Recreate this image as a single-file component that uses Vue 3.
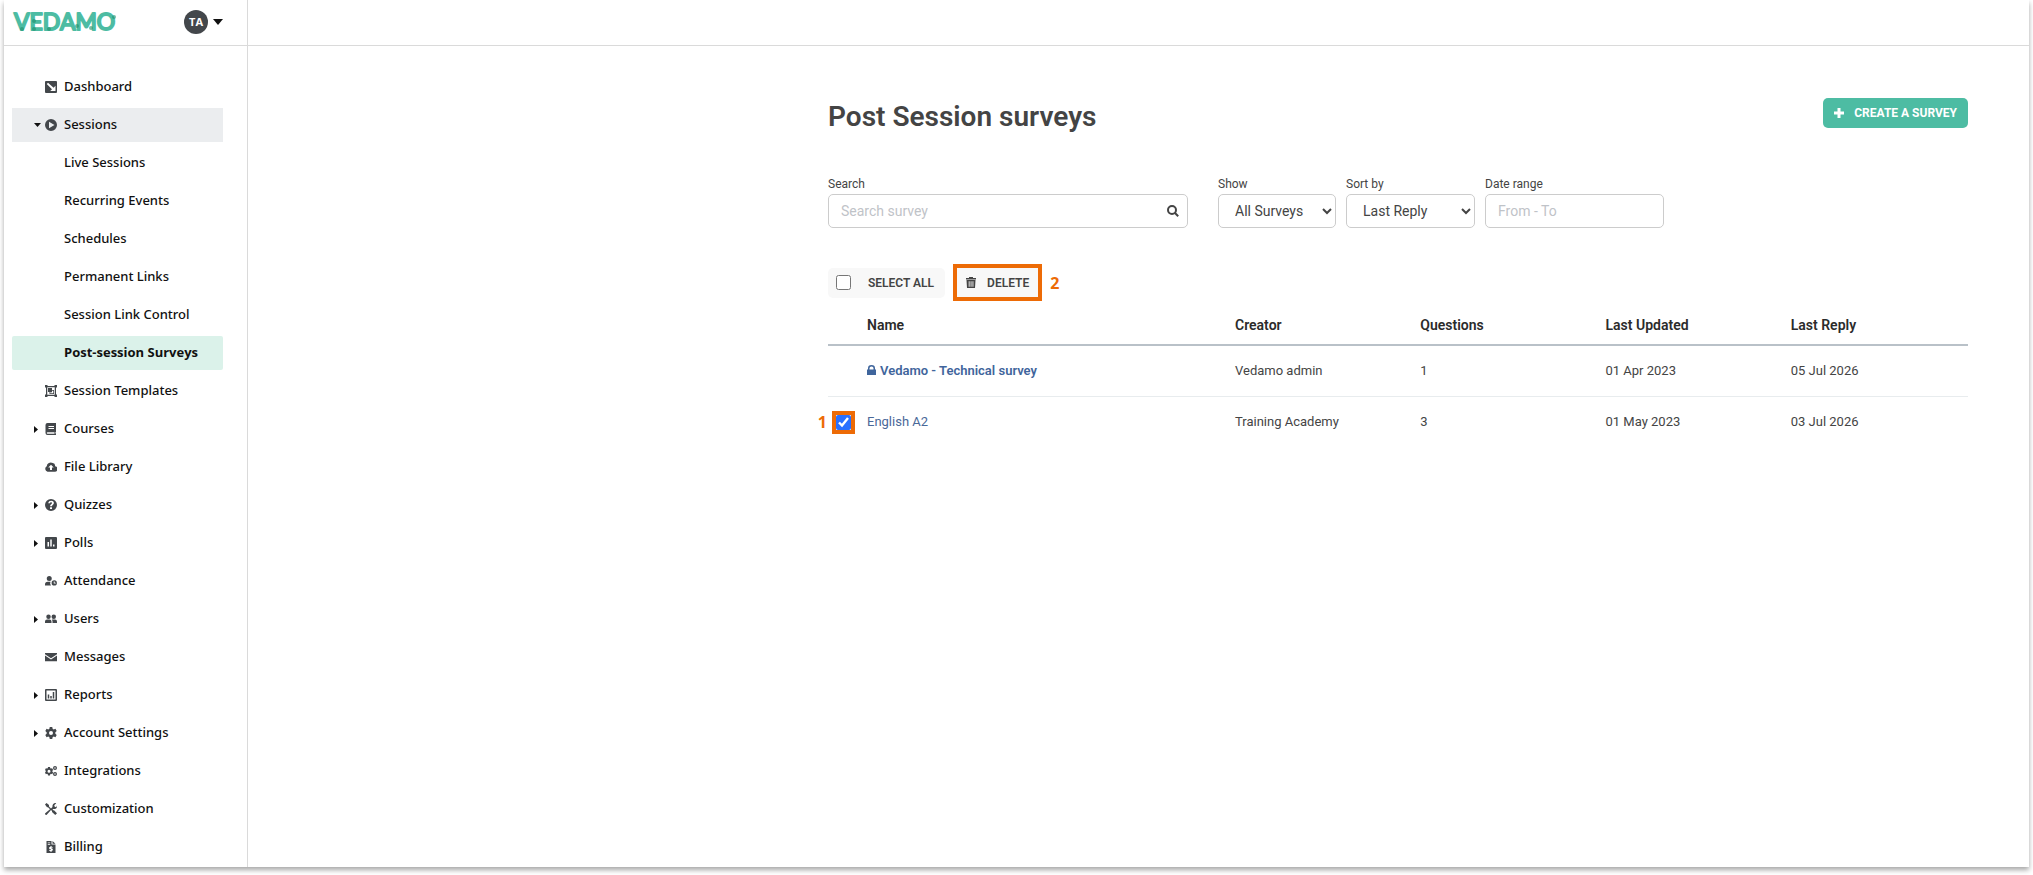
<template>
  <div class="app-frame">
    <header class="topbar">
      <div class="topbar-brand">
        <a href="#" class="logo" aria-label="Vedamo">
          <svg width="112" height="36" viewBox="0 0 112 36">
            <text x="2" y="26" class="logo-text">VEDAMO</text>
            <g class="logo-dots">
              <circle cx="10" cy="25" r="2" />
              <circle cx="22" cy="17" r="2" />
              <circle cx="22" cy="25" r="2" />
              <circle cx="37" cy="25" r="2" />
              <circle cx="65" cy="22" r="2" />
              <circle cx="79" cy="24" r="2" />
              <circle cx="102" cy="13" r="2" />
            </g>
          </svg>
        </a>
        <button type="button" class="account-btn" aria-label="Account">
          <span class="avatar">TA</span>
          <svg class="account-caret" width="10" height="6" viewBox="0 0 10 6"><path d="M0 0h10L5 6z" /></svg>
        </button>
      </div>
    </header>

    <div class="layout">
      <nav class="sidebar">
        <ul class="menu">
          <li v-for="item in menu" :key="item.label">
            <a href="#" class="menu-link" :class="{ open: item.open, active: item.active }">
              <span class="menu-caret">
                <svg v-if="item.open" width="7" height="4" viewBox="0 0 7 4"><path d="M0 0h7L3.500 4z" /></svg>
                <svg v-else-if="item.children" width="4" height="7" viewBox="0 0 4 7"><path d="M0 0v7l4-3.500z" /></svg>
              </span>
              <span class="menu-icon">
                <svg v-if="item.icon" width="12" height="12" viewBox="0 0 24 24">
                  <path fill-rule="evenodd" :d="icons[item.icon]" />
                </svg>
              </span>
              <span class="menu-label">{{ item.label }}</span>
            </a>
          </li>
        </ul>
      </nav>

      <main class="content">
        <div class="page">
          <div class="page-head">
            <h1>Post Session surveys</h1>
            <button type="button" class="btn btn-primary">
              <svg width="10" height="10" viewBox="0 0 10 10"><path d="M3.500 0h3v3.500H10v3H6.500V10h-3V6.500H0v-3h3.500z" /></svg>
              CREATE A SURVEY
            </button>
          </div>

          <form class="filters" @submit.prevent>
            <div class="field field-search">
              <label for="search">Search</label>
              <div class="search-box">
                <input id="search" v-model="search" type="text" placeholder="Search survey" class="control">
                <button type="submit" class="search-btn" aria-label="Search">
                  <svg width="12" height="12" viewBox="0 0 12 12">
                    <circle cx="5" cy="5" r="4" />
                    <path d="M8 8l3.200 3.200" />
                  </svg>
                </button>
              </div>
            </div>
            <div class="field field-show">
              <label for="show">Show</label>
              <select id="show" class="control">
                <option>All Surveys</option>
              </select>
            </div>
            <div class="field field-sort">
              <label for="sort">Sort by</label>
              <select id="sort" class="control">
                <option>Last Reply</option>
              </select>
            </div>
            <div class="field field-date">
              <label for="range">Date range</label>
              <input id="range" v-model="range" type="text" placeholder="From - To" class="control">
            </div>
          </form>

          <div class="bulk-actions">
            <label class="btn select-all">
              <input v-model="allSelected" type="checkbox">
              SELECT ALL
            </label>
            <div class="highlight">
              <button type="button" class="btn btn-delete">
                <svg width="10" height="11" viewBox="0 0 10 11">
                  <path fill-rule="evenodd" d="M3 0h4v1h3v1.500H0V1h3zM.500 3h9l-.500 8H1zM2.700 4.200v5.500h.900V4.200zM4.600 4.200v5.500h.900V4.200zM6.500 4.200v5.500h.900V4.200z" />
                </svg>
                DELETE
              </button>
            </div>
            <span class="step">2</span>
          </div>

          <table class="surveys">
            <thead>
              <tr>
                <th class="col-check"></th>
                <th>Name</th>
                <th class="col-info">Creator</th>
                <th class="col-info">Questions</th>
                <th class="col-info">Last Updated</th>
                <th class="col-info">Last Reply</th>
              </tr>
            </thead>
            <tbody>
              <tr v-for="survey in surveys" :key="survey.name">
                <td class="col-check">
                  <div v-if="!survey.locked" class="highlight highlight-check">
                    <span class="step step-left">1</span>
                    <input v-model="survey.selected" type="checkbox" :aria-label="survey.name">
                  </div>
                </td>
                <td>
                  <a href="#" class="survey-link" :class="{ locked: survey.locked }">
                    <svg v-if="survey.locked" width="9" height="10" viewBox="0 0 9 10">
                      <path fill-rule="evenodd" d="M1 4.500V3.300a3.500 3.300 0 0 1 7 0v1.200h1V10H0V4.500zM2.500 4.500h4V3.300a2 1.900 0 0 0-4 0z" />
                    </svg>
                    {{ survey.name }}
                  </a>
                </td>
                <td>{{ survey.creator }}</td>
                <td>{{ survey.questions }}</td>
                <td>{{ survey.updated }}</td>
                <td>{{ survey.reply }}</td>
              </tr>
            </tbody>
          </table>
        </div>
      </main>
    </div>
  </div>
</template>

<script setup>
import { ref } from 'vue';

const search = ref('');
const range = ref('');
const allSelected = ref(false);

const menu = [
  { label: 'Dashboard', icon: 'dashboard' },
  { label: 'Sessions', icon: 'play', open: true },
  { label: 'Live Sessions' },
  { label: 'Recurring Events' },
  { label: 'Schedules' },
  { label: 'Permanent Links' },
  { label: 'Session Link Control' },
  { label: 'Post-session Surveys', active: true },
  { label: 'Session Templates', icon: 'template' },
  { label: 'Courses', icon: 'book', children: true },
  { label: 'File Library', icon: 'cloud' },
  { label: 'Quizzes', icon: 'question', children: true },
  { label: 'Polls', icon: 'poll', children: true },
  { label: 'Attendance', icon: 'userClock' },
  { label: 'Users', icon: 'users', children: true },
  { label: 'Messages', icon: 'mail' },
  { label: 'Reports', icon: 'report', children: true },
  { label: 'Account Settings', icon: 'gear', children: true },
  { label: 'Integrations', icon: 'gears' },
  { label: 'Customization', icon: 'tools' },
  { label: 'Billing', icon: 'invoice' },
];

const surveys = ref([
  { name: 'Vedamo - Technical survey', locked: true, creator: 'Vedamo admin', questions: 1, updated: '01 Apr 2023', reply: '05 Jul 2026' },
  { name: 'English A2', selected: true, creator: 'Training Academy', questions: 3, updated: '01 May 2023', reply: '03 Jul 2026' },
]);

// 24x24 paths, drawn at 12px
const icons = {
  dashboard: 'M2 0h20a2 2 0 0 1 2 2v20a2 2 0 0 1-2 2H2a2 2 0 0 1-2-2V2a2 2 0 0 1 2-2zM6 3.500L3.500 6l10.500 10.500-3.500 3.500H21V9.500l-3.800 4z',
  play: 'M12 0a12 12 0 1 1 0 24a12 12 0 0 1 0-24zM8 5.500v13L19 12z',
  template: 'M0 0h5v2h14V0h5v5h-2v14h2v5h-5v-2H5v2H0v-5h2V5H0zM4.500 4.500v15h15v-15zM6 6h8v4h4v8H9v-4H6zM10.500 14.500v2h6v-5H14v3z',
  book: 'M5 0h17v18h-1v3h1v3H5a4 4 0 0 1-4-4V4a4 4 0 0 1 4-4zM7 6v2h11V6zM7 10v2h11v-2zM5 18.500a1.500 1.500 0 0 0 0 3h14v-3z',
  cloud: 'M20 10.500A5.500 5.500 0 0 0 15.500 4A8 8 0 0 0 3.500 10.500A6 6 0 0 0 5 21.500H19A5.500 5.500 0 0 0 20 10.500zM12 7.500l5.500 5.500H14V18h-4v-5H6.500z',
  question: 'M12 0a12 12 0 1 1 0 24a12 12 0 0 1 0-24zM6.500 8.500h3.500c0-3 4.500-2.500 4 0c-.500 2-3.800 2-3.800 6h3.600c0-2.500 4-3 4-6.500c0-6-11-6-11.300.5zM10 16.500v3.500h4v-3.500z',
  poll: 'M2 0h20a2 2 0 0 1 2 2v20a2 2 0 0 1-2 2H2a2 2 0 0 1-2-2V2a2 2 0 0 1 2-2zM5 10v9h3v-9zM10.500 5v14h3V5zM16 15v4h3v-4z',
  userClock: 'M8.500 2a5 5 0 1 1 0 10a5 5 0 0 1 0-10zM0 21v-2a5.500 5.500 0 0 1 5.500-5.500H11a7 7 0 0 0 1 7.500zM18.500 10.500a5.300 5.300 0 1 1 0 10.600a5.300 5.300 0 0 1 0-10.600zM17.500 13v4h4v-1.700h-2.200V13z',
  users: 'M7 3a4.500 4.500 0 1 1 0 9a4.500 4.500 0 0 1 0-9zM17.500 3a4.500 4.500 0 1 1 0 9a4.500 4.500 0 0 1 0-9zM0 20v-3a4 4 0 0 1 4-4h5a4 4 0 0 1 4 4v3zM15 20v-3a6 6 0 0 0-1.500-4H20a4 4 0 0 1 4 4v3z',
  mail: 'M0 4h24v2.500l-12 8-12-8zM0 9l12 8 12-8v11.500H0z',
  report: 'M2 0h20a2 2 0 0 1 2 2v20a2 2 0 0 1-2 2H2a2 2 0 0 1-2-2V2a2 2 0 0 1 2-2zM3 3v18h18V3zM5.500 11h3v8h-3zM10.500 14h3v5h-3zM15.500 6h3v13h-3z',
  gear: 'M9.500 0h5l.7 3.500 2.300 1.300 3.400-1.200 2.500 4.300-2.700 2.400v3.400l2.700 2.400-2.500 4.300-3.400-1.200-2.300 1.300-.7 3.500h-5l-.7-3.500-2.300-1.300-3.400 1.200L.6 16.100l2.700-2.400v-3.400L.6 7.900l2.500-4.300 3.400 1.200 2.300-1.300zM12 8a4 4 0 1 0 0 8a4 4 0 0 0 0-8z',
  gears: 'M6 4h4l.5 2.300 1.500.8 2.300-.6 2 3.300-1.500 1.600v2l1.500 1.600-2 3.300-2.300-.6-1.500.8L10 21H6l-.5-2.500-1.500-.8-2.300.6-1.700-3.300 1.500-1.600v-2L0 9.800l1.700-3.300 2.300.6 1.500-.8zM8 9.500a3 3 0 1 0 0 6a3 3 0 0 0 0-6zM20 2a4 4 0 1 1 0 8a4 4 0 0 1 0-8zM20 4.500a1.500 1.500 0 1 0 0 3a1.500 1.500 0 0 0 0-3zM20 14a4 4 0 1 1 0 8a4 4 0 0 1 0-8zM20 16.500a1.500 1.500 0 1 0 0 3a1.500 1.500 0 0 0 0-3z',
  tools: 'M3 0l5 4v3l4 4 3-3c-1-5 3-9 7.500-7.500L18.500 4.500l1 3 3 1L24 5c1 5-3 8-7.500 7l-1.500 1.500 1 1h2L24 20.500 20.500 24 14 18v-2l-2-2-8.500 9.500C1 25-1 22.500.5 20.500L10 12.500 6 8.500H4L0 3z',
  invoice: 'M3 0h10v7h8v17H3zM15 0l6 5.500h-6zM5.500 3v1.500h5V3zM5.500 6v1.500h5V6zM11 10v1.500c-4 .5-3.500 4.500 0 5.200c2 .5 1.500 1.800-2.500.8v2c.8.400 1.700.5 2.500.5V22h2v-2c4-.5 3.500-4.700 0-5.300c-2-.500-1.500-1.600 2-.7v-2c-.700-.300-1.300-.400-2-.500V10z',
};
</script>

<style>
body { margin: 0; background: #fff; }
</style>

<style scoped>
.app-frame {
  margin: 0 4px 8px;
  background: #fff;
  box-shadow: 0 3px 5px rgba(0, 0, 0, 0.35);
  font-family: Roboto, "Liberation Sans", sans-serif;
  font-size: 13px;
  color: #444;
}
.app-frame * { box-sizing: border-box; }
svg { display: block; fill: currentColor; }
button { font-family: inherit; cursor: pointer; }

/* --- TOP BAR --- */
.topbar { border-bottom: 1px solid #dadada; }
.topbar-brand {
  width: 244px;
  height: 45px;
  display: flex;
  align-items: center;
  justify-content: space-between;
  padding: 0 24px 1px 8px;
  border-right: 1px solid #dadada;
}
.logo { color: #4dbca3; }
.logo-text {
  font-family: Lato, sans-serif;
  font-size: 23px;
  font-weight: 400;
  stroke: currentColor;
  stroke-width: 2;
  stroke-linejoin: round;
}
.logo-dots { fill: #1f8f6b; opacity: 0.6; }
.account-btn {
  display: flex;
  align-items: center;
  gap: 5px;
  padding: 0;
  border: none;
  background: none;
  color: #111;
}
.avatar {
  width: 24px;
  height: 24px;
  border-radius: 50%;
  background: #43474b;
  color: #fff;
  font-family: "Open Sans", sans-serif;
  font-size: 11px;
  font-weight: 700;
  line-height: 24px;
  text-align: center;
}

/* --- SIDEBAR --- */
.layout { display: flex; }
.sidebar {
  width: 244px;
  flex-shrink: 0;
  padding: 24px 24px 3px 8px;
  border-right: 1px solid #dadada;
}
.menu {
  display: flex;
  flex-direction: column;
  gap: 4px;
  margin: 0;
  padding: 0;
  list-style: none;
}
.menu-link {
  display: flex;
  align-items: center;
  height: 34px;
  padding-left: 22px;
  color: #111;
  font-family: "Noto Sans", "Open Sans", sans-serif;
  font-size: 13px;
  font-weight: 500;
  text-decoration: none;
}
.menu-link.open { background: #ebedef; }
.menu-link.active {
  background: #dbf2ea;
  border-radius: 2px;
  font-family: "Open Sans", sans-serif;
  font-weight: 700;
}
.menu-caret { width: 11px; }
.menu-icon { width: 19px; color: #43474b; }
.menu-label { padding-bottom: 2px; }

/* --- CONTENT --- */
.content { flex: 1; padding: 52px 61px 0 24px; }
.page { max-width: 1140px; margin-left: auto; }
.page-head { display: flex; align-items: flex-start; justify-content: space-between; }
.page-head h1 { margin: 0; font-size: 28px; font-weight: 600; line-height: 38px; }

.btn {
  display: flex;
  align-items: center;
  height: 30px;
  padding: 0 11px;
  border: none;
  border-radius: 5px;
  background: #f8f8f8;
  color: #444;
  font-size: 12px;
  font-weight: 600;
}
.btn-primary { gap: 10px; background: #4dbca3; color: #fff; font-weight: 700; }

.filters { display: flex; gap: 10px; margin-top: 38px; }
.field { display: flex; flex-direction: column; }
.field label { font-size: 12px; line-height: 20px; }
.field-search { width: 360px; margin-right: 20px; }
.field-show { width: 118px; }
.field-sort { width: 129px; }
.field-date { width: 179px; }
.control {
  width: 100%;
  height: 34px;
  padding: 0 12px;
  border: 1px solid #ccc;
  border-radius: 5px;
  background: #fff;
  color: #444;
  font-family: inherit;
  font-size: 14px;
}
select.control { padding: 0 0 0 12px; }
.control::placeholder { color: #bfc3c8; opacity: 1; }
.search-box { position: relative; }
.search-box .control { padding-right: 36px; }
.search-btn {
  position: absolute;
  top: 0;
  right: 0;
  height: 34px;
  padding: 0 9px;
  border: none;
  background: none;
  color: #444;
}
.search-btn svg { fill: none; stroke: currentColor; stroke-width: 2; }

.bulk-actions { display: flex; align-items: center; gap: 8px; margin-top: 36px; }
.select-all { gap: 17px; padding-left: 8px; }
input[type="checkbox"] { width: 15px; height: 15px; margin: 0; accent-color: #2970ff; }
.btn-delete { gap: 11px; height: 29px; padding: 0 9px; border-radius: 0; }
.highlight { border: 4px solid #ed6b06; }
.step {
  color: #ed6b06;
  font-family: "Open Sans", sans-serif;
  font-size: 16px;
  font-weight: 700;
  line-height: 20px;
}

/* --- TABLE --- */
.surveys {
  width: 100%;
  margin-top: 4px;
  table-layout: fixed;
  border-collapse: separate;
  border-spacing: 0;
  text-align: left;
}
.surveys th {
  height: 41px;
  padding: 0 8px;
  border-bottom: 2px solid #b9c1c8;
  color: #2b2b2b;
  font-size: 14px;
  font-weight: 600;
}
.surveys td { height: 51px; padding: 0 8px 2px; border-bottom: 1px solid #e8ecee; }
.surveys tr:last-child td { border-bottom-color: transparent; }
.surveys .col-check { width: 31px; padding: 0 4px; }
.surveys .col-info { width: 16.25%; }
.highlight-check { position: relative; width: 23px; height: 23px; }
.highlight-check input { display: block; }
.step-left { position: absolute; top: -3px; right: 24px; }
.survey-link { display: flex; align-items: center; gap: 4px; color: #4a6899; text-decoration: none; }
.survey-link.locked { color: #3f659c; font-weight: 600; }
</style>
